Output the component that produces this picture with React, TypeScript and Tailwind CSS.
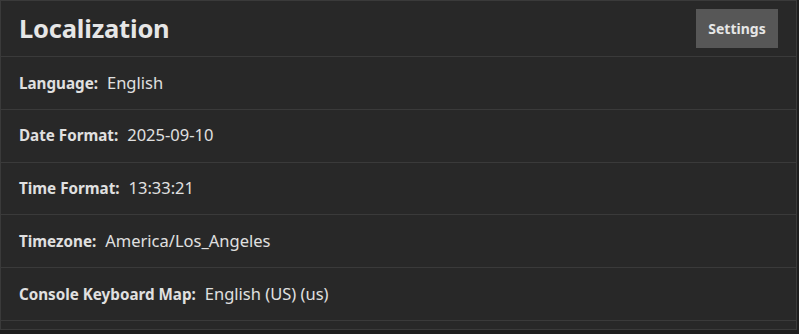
import React from 'react';

const rows: { label: string; value: string }[] = [
  { label: 'Language:', value: 'English' },
  { label: 'Date Format:', value: '2025-09-10' },
  { label: 'Time Format:', value: '13:33:21' },
  { label: 'Timezone:', value: 'America/Los_Angeles' },
  { label: 'Console Keyboard Map:', value: 'English (US) (us)' },
];

export default function App() {
  return (
    <div
      className="h-[334px] w-[799px] bg-[#1e1e1e] text-[#e3e3e3]"
      style={{ fontFamily: '"Noto Sans", "Open Sans", sans-serif' }}
    >
      <div className="h-[330px] w-[797px] border border-[#3a3a3a] bg-[#282828]">
        <div className="flex h-[56px] items-center justify-between border-b border-[#3a3a3a] pl-[18px] pr-[18px]">
          <h1 className="text-[25.5px] font-bold leading-none tracking-[-0.2px] text-[#e6e6e6]">Localization</h1>
          <button className="mt-[-1px] flex h-[39px] w-[82px] items-center justify-center bg-[#575757] text-[14px] font-bold text-[#e6e6e6]">
            Settings
          </button>
        </div>
        {rows.map((row) => (
          <div
            key={row.label}
            className="flex h-[52.8px] items-center border-b border-[#3a3a3a] pl-[18px]"
          >
            <span className="text-[15.2px] font-bold text-[#e0e0e0]">{row.label}</span>
            <span className="ml-[9px] text-[16.5px] text-[#e0e0e0]">{row.value}</span>
          </div>
        ))}
      </div>
    </div>
  );
}
